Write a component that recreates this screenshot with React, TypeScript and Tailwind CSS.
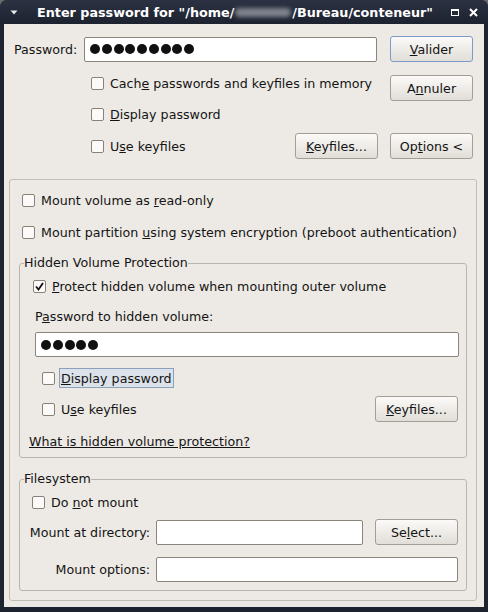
import React from "react";

const Check = ({ checked = false }: { checked?: boolean }) => (
  <span className="w-[13px] h-[13px] shrink-0 border border-[#878178] rounded-[2px] bg-[#fbfaf9] flex items-center justify-center">
    {checked && (
      <svg width="9" height="9" viewBox="0 0 9 9">
        <path d="M1 4.5 L3.5 7.5 L8 1" fill="none" stroke="#111" strokeWidth="1.8" />
      </svg>
    )}
  </span>
);

const Btn = ({
  children,
  def = false,
  className = "",
}: {
  children: React.ReactNode;
  def?: boolean;
  className?: string;
}) => (
  <div
    className={
      "w-[83px] h-[26px] shrink-0 flex items-center justify-center rounded-[3px] border bg-linear-to-b from-[#fbfaf8] to-[#e1ded8] " +
      (def ? "border-[#7b9cc8] " : "border-[#a29d95] ") +
      className
    }
  >
    {children}
  </div>
);

const Dots = ({ n }: { n: number }) => (
  <div className="flex gap-[1.75px] pl-[5px]">
    {Array.from({ length: n }).map((_, i) => (
      <span key={i} className="w-[10px] h-[10px] rounded-full bg-[#111]" />
    ))}
  </div>
);

const Input = ({ className = "", children }: { className?: string; children?: React.ReactNode }) => (
  <div
    className={
      "h-[25px] shrink-0 bg-white border border-[#8a847b] rounded-[2px] flex items-center " + className
    }
  >
    {children}
  </div>
);

export default function App() {
  return (
    <div className="w-[488px] h-[612px] bg-[#6a6b6d] font-['DejaVu_Sans',sans-serif] text-[12.65px] leading-[15px] text-[#141414]">
      <div className="w-[488px] h-[612px] bg-[#1e2330] rounded-t-[7px] flex flex-col">
        {/* Title bar */}
        <div className="h-[24px] flex items-center rounded-t-[7px] bg-linear-to-b from-[#2c3242] to-[#1d2230] text-white">
          <svg width="8" height="5" viewBox="0 0 8 5" className="ml-[10px]">
            <path d="M0.5 0.5 L7.5 0.5 L4 4.5 Z" fill="#e8e8e8" />
          </svg>
          <div className="ml-[19px] font-bold text-[12.75px] whitespace-nowrap flex items-center">
            <span>Enter password for "/home/</span>
            <span className="inline-block w-[56px] h-[9px] mx-[1px] bg-[#7e828c] rounded-full blur-[2px]" />
            <span>/Bureau/conteneur"</span>
          </div>
          <div className="ml-auto mr-[10px] flex items-center gap-[10px]">
            <span className="w-[8px] h-[7px] border border-white border-t-2" />
            <svg width="9" height="9" viewBox="0 0 9 9">
              <path d="M1 1 L8 8 M8 1 L1 8" stroke="#fff" strokeWidth="2" />
            </svg>
          </div>
        </div>

        {/* Body */}
        <div className="flex-1 mx-[4px] mb-[5px] bg-[#edeae5] flex flex-col">
          {/* Top section */}
          <div className="flex pl-[10px] pt-[12px] pr-[11px]">
            <div className="flex-1 flex flex-col">
              <div className="flex items-center h-[26px]">
                <span className="w-[70px]">Password:</span>
                <Input className="w-[293px]">
                  <Dots n={9} />
                </Input>
              </div>
              <div className="mt-[11px] h-[20px] pl-[77px] flex items-center gap-[6px]">
                <Check />
                <span>
                  Cach<u>e</u> passwords and keyfiles in memory
                </span>
              </div>
              <div className="mt-[11px] h-[20px] pl-[77px] flex items-center gap-[6px]">
                <Check />
                <span>
                  <u>D</u>isplay password
                </span>
              </div>
              <div className="mt-[9px] h-[26px] flex items-center justify-between">
                <div className="pl-[77px] flex items-center gap-[6px]">
                  <Check />
                  <span>
                    U<u>s</u>e keyfiles
                  </span>
                </div>
                <Btn>
                  <span>
                    <u>K</u>eyfiles...
                  </span>
                </Btn>
              </div>
            </div>
            <div className="ml-[12px] w-[83px] flex flex-col">
              <Btn def>
                <span>
                  <u>V</u>alider
                </span>
              </Btn>
              <Btn className="mt-[13px]">
                <span>
                  A<u>n</u>nuler
                </span>
              </Btn>
              <Btn className="mt-[32px]">
                <span>
                  Op<u>t</u>ions &lt;
                </span>
              </Btn>
            </div>
          </div>

          {/* Options panel */}
          <div className="mt-[20px] ml-[5px] mr-[7px] border border-[#c2bdb5] rounded-[3px] pt-[10px] pb-[9px] flex flex-col">
            <div className="h-[20px] pl-[12px] flex items-center gap-[6px]">
              <Check />
              <span>
                Mount volume as <u>r</u>ead-only
              </span>
            </div>
            <div className="mt-[12px] h-[20px] pl-[12px] flex items-center gap-[6px]">
              <Check />
              <span>
                Mount partition <u>u</u>sing system encryption (preboot authentication)
              </span>
            </div>

            <fieldset className="mt-[13px] mx-[9px] border border-[#b9b4ac] rounded-[3px] pt-[5px] pb-[6px] flex flex-col">
              <legend className="ml-[4px] leading-[16px]">Hidden Volume Protection</legend>
              <div className="h-[20px] ml-[13px] flex items-center gap-[6px]">
                <Check checked />
                <span>
                  <u>P</u>rotect hidden volume when mounting outer volume
                </span>
              </div>
              <div className="mt-[10px] h-[20px] ml-[15px] flex items-center">
                <span>
                  P<u>a</u>ssword to hidden volume:
                </span>
              </div>
              <Input className="mt-[6px] ml-[15px] w-[424px]">
                <Dots n={5} />
              </Input>
              <div className="mt-[11px] h-[20px] ml-[22px] flex items-center gap-[4px]">
                <Check />
                <span className="h-[20px] px-[1px] border border-[#8d9fba] bg-[#dce2ea] flex items-center">
                  <u>D</u>isplay password
                </span>
              </div>
              <div className="mt-[8px] h-[26px] ml-[22px] mr-[8px] flex items-center justify-between">
                <div className="flex items-center gap-[6px]">
                  <Check />
                  <span>
                    U<u>s</u>e keyfiles
                  </span>
                </div>
                <Btn>
                  <span>
                    <u>K</u>eyfiles...
                  </span>
                </Btn>
              </div>
              <div className="mt-[9px] h-[20px] ml-[9px] flex items-center">
                <span className="underline">What is hidden volume protection?</span>
              </div>
            </fieldset>

            <fieldset className="mt-[13px] mx-[9px] border border-[#b9b4ac] rounded-[3px] pt-[5px] pb-[8px] flex flex-col">
              <legend className="ml-[4px] leading-[16px]">Filesystem</legend>
              <div className="h-[20px] ml-[12px] flex items-center gap-[6px]">
                <Check />
                <span>
                  Do <u>n</u>ot mount
                </span>
              </div>
              <div className="mt-[7px] h-[26px] flex items-center">
                <span className="w-[130px] text-right">Mount at directory:</span>
                <Input className="ml-[6px] w-[207px]" />
                <Btn className="ml-[12px]">
                  <span>
                    Se<u>l</u>ect...
                  </span>
                </Btn>
              </div>
              <div className="mt-[12px] h-[25px] flex items-center">
                <span className="w-[130px] text-right">Mount options:</span>
                <Input className="ml-[6px] w-[302px]" />
              </div>
            </fieldset>
          </div>
        </div>
      </div>
    </div>
  );
}
